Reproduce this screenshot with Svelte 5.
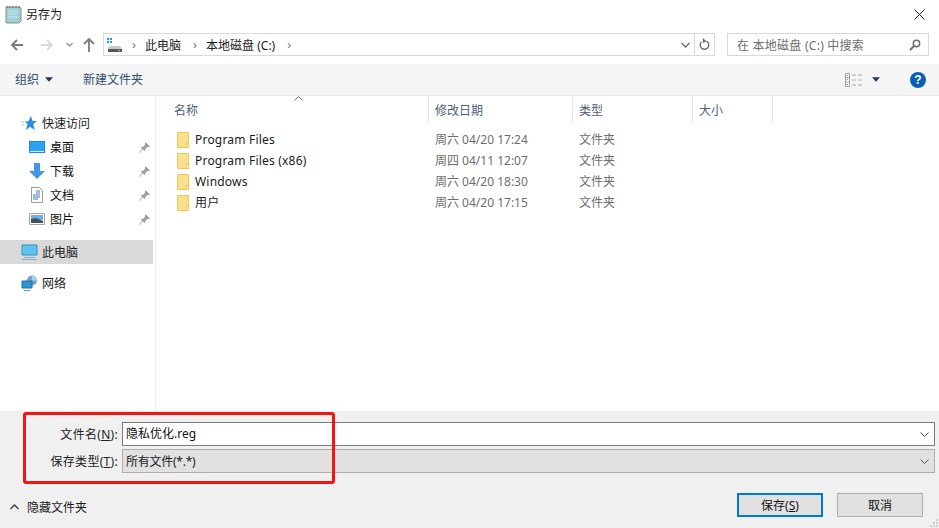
<script>
	const quick = [
		{ name: '桌面', icon: 'desktop' },
		{ name: '下载', icon: 'download' },
		{ name: '文档', icon: 'doc' },
		{ name: '图片', icon: 'pic' }
	];
	const files = [
		{ name: 'Program Files', date: '周六 04/20 17:24' },
		{ name: 'Program Files (x86)', date: '周四 04/11 12:07' },
		{ name: 'Windows', date: '周六 04/20 18:30' },
		{ name: '用户', date: '周六 04/20 17:15', cjk: true }
	];
</script>

<div class="dialog">
	<div class="titlebar">
		<svg class="app-icon" width="17" height="20" viewBox="0 0 17 20">
			<path d="M1 3h13l2 1v13l-2 2H2l-1-1z" fill="#9fd0d8" stroke="#8a8f86" />
			<path d="M3 7h10M3 10h10M3 13h10" stroke="#c9e6ea" />
			<path d="M2 2v2M5 2v2M8 2v2M11 2v2M14 2v2" stroke="#666" />
		</svg>
		<span class="title">另存为</span>
		<svg class="close" width="11" height="11" viewBox="0 0 11 11">
			<path d="M.5.5l10 10M10.5.5l-10 10" stroke="#222" fill="none" />
		</svg>
	</div>

	<div class="navbar">
		<svg class="nav-btn" width="14" height="14" viewBox="0 0 14 14">
			<path d="M13 7H2M7 2 2 7l5 5" stroke="#7a7a7a" stroke-width="1.8" fill="none" />
		</svg>
		<svg class="nav-btn forward" width="14" height="14" viewBox="0 0 14 14">
			<path d="M1 7h11M7 2l5 5-5 5" stroke="#d8d8d8" stroke-width="1.8" fill="none" />
		</svg>
		<svg class="nav-down" width="7" height="5" viewBox="0 0 7 5">
			<path d="M.5 1l3 3 3-3" stroke="#8a8a8a" stroke-width="1.2" fill="none" />
		</svg>
		<svg class="nav-btn up" width="14" height="15" viewBox="0 0 14 15">
			<path d="M7 15V2M2 7l5-5 5 5" stroke="#7a7a7a" stroke-width="1.8" fill="none" />
		</svg>
		<div class="address">
			<svg class="drive" width="16" height="14" viewBox="0 0 16 14">
				<path d="M0 0h2v2H0zM3 0h2v2H3zM0 3h2v2H0zM3 3h2v2H3z" fill="#1ba1e2" />
				<path d="M2 8h11l2 3v3H1v-3z" fill="#c9c9c9" />
				<path d="M1 11h14v3H1z" fill="#555" />
				<path d="M11 12h2v1h-2z" fill="#7ee07e" />
			</svg>
			<span class="sep">›</span>
			<span class="crumb">此电脑</span>
			<span class="sep">›</span>
			<span class="crumb">本地磁盘 (C:)</span>
			<span class="sep">›</span>
			<svg class="addr-down" width="9" height="6" viewBox="0 0 9 6">
				<path d="M.5 1l4 4 4-4" stroke="#666" stroke-width="1.3" fill="none" />
			</svg>
			<div class="refresh">
				<svg width="11" height="13" viewBox="0 0 11 13">
					<path d="M7.5 3.2A4.3 4.3 0 1 1 2.4 4M4.5 .5v3.4M4.5 .5" stroke="#6f6f6f" stroke-width="1.4" fill="none" />
					<path d="M4 .5l3.5 2.7L4 5z" fill="#6f6f6f" />
				</svg>
			</div>
		</div>
		<div class="search">
			<span>在 本地磁盘 (C:) 中搜索</span>
			<svg width="12" height="12" viewBox="0 0 12 12">
				<circle cx="7.5" cy="4.5" r="3.2" stroke="#6f6f6f" stroke-width="1.5" fill="none" />
				<path d="M5 7l-4 4" stroke="#6f6f6f" stroke-width="2" />
			</svg>
		</div>
	</div>

	<div class="toolbar">
		<span class="tool">组织</span>
		<svg class="caret" width="8" height="5" viewBox="0 0 9 5"><path d="M0 0h9L4.500 5z" fill="#1f3a5f" /></svg>
		<span class="tool new-folder">新建文件夹</span>
		<svg class="views" width="17" height="14" viewBox="0 0 17 14">
			<path d="M.5.500h4v13h-4zM.5 4.500h4M.5 9h4" stroke="#a0a0a0" fill="#fff" />
			<path d="M2 2h1v1H2zM2 6h1v1H2z" fill="#4a90d9" />
			<path d="M2 11h1v1H2z" fill="#d04040" />
			<path d="M7 2h4M13 2h4M7 7h4M13 7h4M7 12h4M13 12h4" stroke="#a8a8a8" />
		</svg>
		<svg class="caret views-caret" width="8" height="5" viewBox="0 0 9 5"><path d="M0 0h9L4.500 5z" fill="#1f3a5f" /></svg>
		<div class="help">?</div>
	</div>

	<div class="content">
		<nav class="sidebar">
			<div class="side-row head">
				<svg width="16" height="15" viewBox="0 0 16 15">
					<path d="M10 0l1.500 5H16l-3.700 3 1.400 6-4.700-3.300L5 14l1.500-6-3-2.500h3.800z" fill="#2b8fe0" />
					<path d="M0 6h3M1 9h2" stroke="#9cc8ea" />
				</svg>
				<span>快速访问</span>
			</div>
			{#each quick as item}
				<div class="side-row sub">
					<svg class="side-icon" width="16" height="16" viewBox="0 0 16 16">
						{#if item.icon === 'desktop'}
							<path d="M0 2h16v12H0z" fill="#1e88e5" />
							<path d="M1 3h14v9H1z" fill="#2ba3f2" />
							<path d="M1 12h14v1H1z" fill="#d5ecfb" />
						{:else if item.icon === 'download'}
							<path d="M5 0h6v8h5l-8 8-8-8h5z" fill="#3f97e4" />
						{:else if item.icon === 'doc'}
							<path d="M2.500.500h8l3 3v12h-11z" fill="#fff" stroke="#9a9a9a" />
							<path d="M7 4h4M7 6h4M4 8h7M4 10h7M4 12h5" stroke="#3a7fb5" />
						{:else}
							<path d="M.5 2.500h15v11H.5z" fill="#fff" stroke="#a5a5a5" />
							<path d="M2 4h12v5H2z" fill="#6fb0dc" />
							<path d="M2 8l5-1 7 3v2H2z" fill="#3f5360" />
						{/if}
					</svg>
					<span>{item.name}</span>
					<svg class="pin" width="11" height="11" viewBox="0 0 11 11">
						<path d="M6.500 0 11 4.500 9.500 5 8 5 6 7.500V9.500L1.500 5h2L6 3V1.500z" fill="#9a9fa3" />
						<path d="M3.500 7 .5 10.500" stroke="#9a9fa3" />
					</svg>
				</div>
			{/each}
			<div class="side-row head selected">
				<svg class="pc" width="17" height="16" viewBox="0 0 17 16">
					<path d="M1 1h15v10H1z" fill="#5cc4f2" stroke="#3a8fbf" />
					<path d="M3 13h11v1H3zM1 15h15v1H1z" fill="#8fa9b8" />
				</svg>
				<span>此电脑</span>
			</div>
			<div class="side-row head network">
				<svg class="pc" width="17" height="16" viewBox="0 0 17 16">
					<circle cx="11" cy="5.500" r="5" fill="#6fa8c8" />
					<path d="M11 .5a5 5 0 0 1 5 5h-5z" fill="#a9cfe4" />
					<path d="M1 6h10v7H1z" fill="#2e93d6" stroke="#1f6fa8" />
					<path d="M3 15h6v1H3z" fill="#6d8ea3" />
				</svg>
				<span>网络</span>
			</div>
		</nav>

		<section class="list">
			<svg class="sort" width="9" height="5" viewBox="0 0 9 5">
				<path d="M.5 4.500l4-4 4 4" stroke="#6a6a6a" fill="none" />
			</svg>
			<div class="list-head">
				<div class="col-name">名称</div>
				<div class="col-date">修改日期</div>
				<div class="col-type">类型</div>
				<div class="col-size">大小</div>
			</div>
			<div class="rows">
				{#each files as file}
					<div class="row">
						<div class="col-name name">
							<svg width="12" height="16" viewBox="0 0 13 16" preserveAspectRatio="none">
								<path d="M.5.500h12v15H.5z" fill="#fce08f" stroke="#eec550" />
								<path d="M10 11v4.500h2.500V11z" fill="#fff3c8" stroke="#eec550" />
							</svg>
							<span class:cjk={file.cjk}>{file.name}</span>
						</div>
						<div class="col-date dim">{file.date}</div>
						<div class="col-type dim">文件夹</div>
					</div>
				{/each}
			</div>
		</section>
	</div>

	<div class="bottom">
		<div class="form-row first">
			<label for="fname">文件名(<u>N</u>):</label>
			<div class="field">
				<input id="fname" value="隐私优化.reg" />
				<svg width="9" height="5" viewBox="0 0 9 5"><path d="M.5.500l4 4 4-4" stroke="#555" fill="none" /></svg>
			</div>
		</div>
		<div class="form-row">
			<label for="ftype">保存类型(<u>T</u>):</label>
			<div class="field type" id="ftype">
				<span>所有文件(*.*)</span>
				<svg width="9" height="5" viewBox="0 0 9 5"><path d="M.5.500l4 4 4-4" stroke="#555" fill="none" /></svg>
			</div>
		</div>
		<div class="actions">
			<div class="hide-folders">
				<svg width="9" height="6" viewBox="0 0 9 6"><path d="M.5 5l4-4 4 4" stroke="#444" stroke-width="1.500" fill="none" /></svg>
				<span>隐藏文件夹</span>
			</div>
			<button class="primary">保存(<u>S</u>)</button>
			<button>取消</button>
		</div>
		<div class="annotation"></div>
		<svg class="grip" width="9" height="9" viewBox="0 0 9 9">
			<path d="M7 1h2v2H7zM4 4h2v2H4zM7 4h2v2H7zM1 7h2v2H1zM4 7h2v2H4zM7 7h2v2H7z" fill="#d0d0d0" />
		</svg>
	</div>
</div>

<style>
	:global(body) {
		margin: 0;
		background: #fff;
	}

	.dialog {
		width: 939px;
		height: 528px;
		display: flex;
		flex-direction: column;
		overflow: hidden;
		font-family: 'Noto Sans', 'Noto Sans CJK SC', sans-serif;
		font-size: 12px;
		color: #1a1a1a;
	}

	.titlebar {
		height: 30px;
		flex: none;
		display: flex;
		align-items: center;
		padding: 0 14px 2px 5px;
		box-sizing: border-box;
	}

	.title {
		margin-left: 4px;
		flex: 1;
	}

	.navbar {
		height: 34px;
		flex: none;
		display: flex;
		align-items: center;
		padding-left: 10px;
		padding-bottom: 5px;
		box-sizing: border-box;
	}

	.forward {
		margin-left: 16px;
	}

	.nav-down {
		margin-left: 12px;
	}

	.up {
		margin-left: 9px;
		margin-right: 7px;
	}

	.address {
		width: 612px;
		height: 23px;
		box-sizing: border-box;
		border: 1px solid #d9d9d9;
		display: flex;
		align-items: center;
		padding-left: 3px;
	}

	.drive {
		margin-right: 9px;
	}

	.sep {
		color: #777;
		font-size: 13px;
		margin: 0 7px 2px 0;
	}

	.crumb {
		margin-right: 14px;
		margin-left: 2px;
	}

	.crumb + .sep {
		margin-left: -2px;
	}

	.addr-down {
		margin-left: auto;
		margin-right: 4px;
	}

	.refresh {
		width: 19px;
		height: 100%;
		border-left: 1px solid #d9d9d9;
		display: flex;
		align-items: center;
		justify-content: center;
	}

	.search {
		margin-left: 12px;
		width: 202px;
		height: 23px;
		box-sizing: border-box;
		border: 1px solid #d9d9d9;
		display: flex;
		align-items: center;
		justify-content: space-between;
		padding: 0 7px 0 9px;
		color: #6d6d6d;
		letter-spacing: 0.25px;
	}

	.toolbar {
		height: 32px;
		flex: none;
		background: #f5f5f5;
		border-bottom: 1px solid #e8e8e8;
		display: flex;
		align-items: center;
		padding-left: 15px;
		box-sizing: border-box;
		color: #33506e;
	}

	.tool {
		padding-bottom: 2px;
	}

	.caret {
		margin-left: 6px;
	}

	.new-folder {
		margin-left: 30px;
	}

	.views {
		margin-left: auto;
	}

	.views-caret {
		margin-left: 10px;
	}

	.help {
		margin: 0 13px 0 30px;
		width: 16px;
		height: 16px;
		border-radius: 50%;
		background: #0a5fb0;
		color: #fff;
		font-weight: 700;
		font-size: 12px;
		line-height: 16px;
		text-align: center;
		font-family: 'Liberation Sans', sans-serif;
	}

	.content {
		flex: 1;
		min-height: 0;
		display: flex;
		background: #fff;
	}

	.sidebar {
		width: 156px;
		flex: none;
		box-sizing: border-box;
		border-right: 1px solid #eee;
		padding-top: 15px;
	}

	.side-row {
		height: 24px;
		display: flex;
		align-items: center;
		width: 153px;
		box-sizing: border-box;
	}

	.head {
		padding-left: 21px;
		gap: 5px;
	}

	.sub {
		padding-left: 29px;
		gap: 5px;
		color: #111;
	}

	.pin {
		margin-left: auto;
		margin-right: 3px;
	}

	.selected {
		background: #d9d9d9;
		margin-top: 9px;
		gap: 2px;
	}

	.network {
		margin-top: 7px;
		gap: 2px;
	}

	.pc {
		margin-right: 2px;
	}

	.list {
		flex: 1;
		position: relative;
	}

	.sort {
		position: absolute;
		left: 138px;
		top: 0;
	}

	.list-head {
		display: flex;
		height: 27px;
		align-items: center;
		color: #4c607a;
	}

	.list-head > div {
		height: 100%;
		display: flex;
		align-items: center;
		border-right: 1px solid #e5e5e5;
		box-sizing: border-box;
	}

	.col-name {
		width: 273px;
		padding-left: 18px;
		box-sizing: border-box;
	}

	.col-date {
		width: 144px;
		padding-left: 6px;
		box-sizing: border-box;
	}

	.col-type {
		width: 120px;
		padding-left: 6px;
		box-sizing: border-box;
	}

	.col-size {
		width: 80px;
		padding-left: 6px;
	}

	.rows {
		padding-top: 6px;
	}

	.row {
		display: flex;
		height: 21px;
		align-items: center;
	}

	.name {
		display: flex;
		align-items: center;
		gap: 6px;
		padding-left: 21px;
		letter-spacing: 0.2px;
	}

	.cjk {
		padding-bottom: 2px;
	}

	.dim {
		color: #6d6d6d;
		padding-bottom: 2px;
	}

	.bottom {
		height: 117px;
		flex: none;
		background: #f0f0f0;
		position: relative;
		padding-top: 11px;
		box-sizing: border-box;
	}

	.form-row {
		display: flex;
		align-items: center;
		height: 24px;
		margin-bottom: 3px;
	}

	label {
		width: 118px;
		text-align: right;
		margin-right: 4px;
		color: #222;
		letter-spacing: 0.3px;
	}

	.field {
		width: 813px;
		height: 24px;
		box-sizing: border-box;
		border: 1px solid #7a7a7a;
		background: #fff;
		display: flex;
		align-items: center;
		padding-right: 5px;
	}

	.field svg {
		flex: none;
	}

	input {
		flex: 1;
		border: 0;
		outline: 0;
		padding: 0 0 2px 3px;
		background: transparent;
		font: inherit;
		color: #111;
	}

	.type {
		background: #e1e1e1;
		border-color: #adadad;
		justify-content: space-between;
		padding-left: 3px;
		letter-spacing: -0.25px;
	}

	.actions {
		display: flex;
		align-items: center;
		margin-top: 20px;
		padding-right: 16px;
		gap: 14px;
	}

	.hide-folders {
		display: flex;
		align-items: center;
		gap: 8px;
		margin-right: auto;
		padding-left: 10px;
		margin-top: 4px;
	}

	button {
		width: 86px;
		height: 24px;
		box-sizing: border-box;
		background: #e1e1e1;
		border: 1px solid #adadad;
		padding: 0;
		font: inherit;
		color: #111;
	}

	.primary {
		border: 2px solid #0078d7;
	}

	.annotation {
		position: absolute;
		left: 23px;
		top: 1px;
		width: 312px;
		height: 72px;
		box-sizing: border-box;
		border: 3px solid #f5140f;
		border-radius: 3px;
	}

	.grip {
		position: absolute;
		right: 1px;
		bottom: 1px;
	}
</style>
